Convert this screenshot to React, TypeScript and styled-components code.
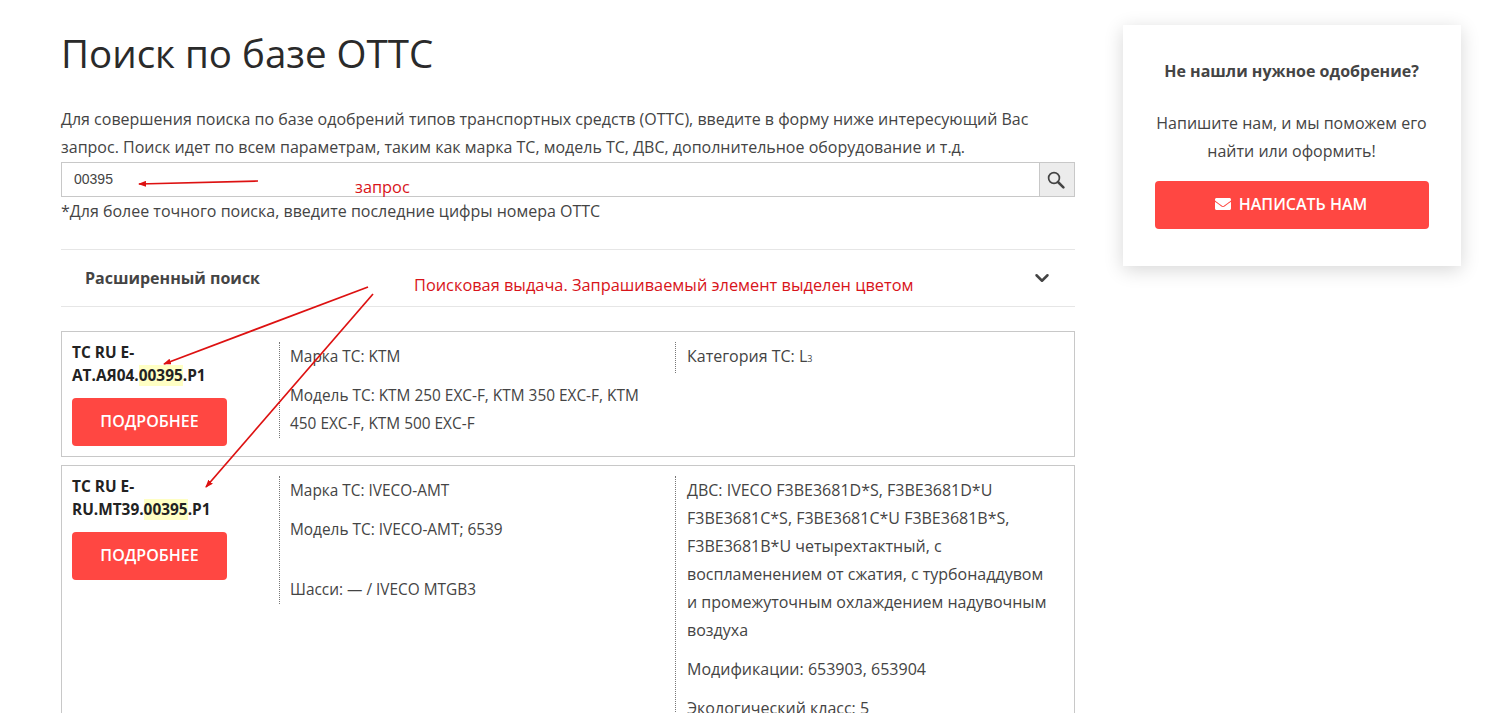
import React from 'react';
import styled, { createGlobalStyle } from 'styled-components';
import { FaEnvelope } from 'react-icons/fa';
import { ChevronDown } from 'lucide-react';

const GlobalStyle = createGlobalStyle`
    html, body {
        margin: 0;
        padding: 0;
        background: #fff;
    }
    body {
        font-family: 'Open Sans', 'Noto Sans', sans-serif;
        font-size: 16px;
        line-height: 28px;
        color: #444;
        overflow: hidden;
    }
`;

const Page = styled.div`
    position: relative;
    height: 713px;
    overflow: hidden;
    display: flex;
    align-items: flex-start;
    gap: 48px;
    padding: 25px 0 0 61px;
    box-sizing: border-box;
`;

const Main = styled.main`
    width: 1014px;
    flex: none;
`;

const Title = styled.h1`
    margin: 0 0 24px;
    font-size: 38.5px;
    line-height: 56px;
    font-weight: 400;
    color: #2a2a2a;
`;

const Intro = styled.p`
    margin: 0;
`;

const SearchRow = styled.div`
    display: flex;
    height: 35px;
    margin-top: 1px;
    box-sizing: border-box;
    border: 1px solid #c8c8c8;
`;

const SearchInput = styled.div`
    flex: 1;
    padding-left: 12px;
    font-family: 'Liberation Sans', Arial, sans-serif;
    font-size: 14px;
    line-height: 32px;
    color: #444;
`;

const SearchButton = styled.div`
    width: 34px;
    display: flex;
    align-items: center;
    justify-content: center;
    background: #ececec;
    border-left: 1px solid #c8c8c8;
    svg {
        margin-right: 2px;
    }
`;

const Note = styled.p`
    margin: 0 0 24px;
`;

const Accordion = styled.div`
    display: flex;
    align-items: center;
    justify-content: space-between;
    height: 58px;
    box-sizing: border-box;
    padding: 0 24px;
    margin-bottom: 24px;
    border-top: 1px solid #e6e6e6;
    border-bottom: 1px solid #e6e6e6;
    font-weight: 700;
    color: #444;
    svg {
        margin-right: -2px;
    }
`;

const Result = styled.article`
    display: grid;
    grid-template-columns: 207px 396px 1fr;
    box-sizing: border-box;
    padding: 10px;
    margin-bottom: 8px;
    border: 1px solid #c8c8c8;
    align-items: start;
`;

const Head = styled.div`
    padding-right: 40px;
`;

const Number = styled.div`
    font-weight: 700;
    font-size: 15.4px;
    line-height: 23px;
    color: #222;
    margin: -1px 0 11px;
`;

const Mark = styled.span`
    background: #ffffc4;
`;

const ActionButton = styled.div<{ $wide?: boolean }>`
    display: flex;
    align-items: center;
    justify-content: center;
    gap: 8px;
    box-sizing: border-box;
    width: ${(p) => (p.$wide ? '274px' : '155px')};
    height: 48px;
    padding-right: ${(p) => (p.$wide ? '2px' : '0')};
    padding-bottom: 2px;
    border-radius: 4px;
    background: #ff4742;
    color: #fff;
    font-weight: 600;
    font-size: 16px;
`;

const Column = styled.div<{ $narrow?: boolean }>`
    border-left: 1px dotted #777;
    padding-top: ${(p) => (p.$narrow ? '1px' : '0')};
    padding-left: ${(p) => (p.$narrow ? '10px' : '11px')};
    padding-right: ${(p) => (p.$narrow ? '24px' : '10px')};
    font-size: ${(p) => (p.$narrow ? '15.4px' : '16px')};
`;

const Field = styled.p<{ $gap?: number }>`
    margin: 0 0 ${(p) => p.$gap ?? 11}px;
    &:last-child {
        margin-bottom: 0;
    }
`;

const Small = styled.span`
    font-size: 9px;
`;

const Aside = styled.aside`
    width: 338px;
    flex: none;
    box-sizing: border-box;
    padding: 32px 33px 37px 32px;
    background: #fff;
    box-shadow: 0 4px 18px rgba(0, 0, 0, 0.16);
    text-align: center;
`;

const AsideTitle = styled.p`
    margin: 0 0 24px;
    font-weight: 700;
`;

const AsideText = styled.p`
    margin: 0 0 16px;
`;

const Overlay = styled.svg`
    position: absolute;
    inset: 0;
    pointer-events: none;
`;

const Label = styled.span<{ $x: number; $y: number }>`
    position: absolute;
    left: ${(p) => p.$x}px;
    top: ${(p) => p.$y}px;
    color: #d8141a;
    font-size: 16.35px;
    white-space: nowrap;
`;

export default function App() {
    return (
        <>
            <GlobalStyle />
            <Page>
                <Main>
                    <Title>Поиск по базе ОТТС</Title>
                    <Intro>
                        Для совершения поиска по базе одобрений типов транспортных средств (ОТТС), введите в форму ниже интересующий Вас запрос. Поиск идет по всем параметрам, таким как марка ТС, модель ТС, ДВС, дополнительное оборудование и т.д.
                    </Intro>
                    <SearchRow>
                        <SearchInput>00395</SearchInput>
                        <SearchButton>
                            <svg width="18" height="18" viewBox="0 0 18 18" fill="none" stroke="#444">
                                <circle cx="7" cy="7" r="5.4" strokeWidth="1.7" />
                                <line x1="11" y1="11" x2="16.4" y2="16.4" strokeWidth="2.5" strokeLinecap="round" />
                            </svg>
                        </SearchButton>
                    </SearchRow>
                    <Note>*Для более точного поиска, введите последние цифры номера ОТТС</Note>
                    <Accordion>
                        Расширенный поиск
                        <ChevronDown size={22} strokeWidth={2.7} />
                    </Accordion>

                    <Result>
                        <Head>
                            <Number>
                                ТС RU E-AT.АЯ04.<Mark>00395</Mark>.Р1
                            </Number>
                            <ActionButton>ПОДРОБНЕЕ</ActionButton>
                        </Head>
                        <Column $narrow>
                            <Field>Марка ТС: KTM</Field>
                            <Field>Модель ТС: KTM 250 EXC-F, KTM 350 EXC-F, KTM 450 EXC-F, KTM 500 EXC-F</Field>
                        </Column>
                        <Column>
                            <Field>
                                Категория ТС: L<Small>3</Small>
                            </Field>
                        </Column>
                    </Result>

                    <Result>
                        <Head>
                            <Number>
                                ТС RU E-RU.МТ39.<Mark>00395</Mark>.Р1
                            </Number>
                            <ActionButton>ПОДРОБНЕЕ</ActionButton>
                        </Head>
                        <Column $narrow>
                            <Field>Марка ТС: IVECO-AMT</Field>
                            <Field $gap={32}>Модель ТС: IVECO-AMT; 6539</Field>
                            <Field>Шасси: — / IVECO MTGB3</Field>
                        </Column>
                        <Column>
                            <Field>
                                ДВС: IVECO F3BE3681D*S, F3BE3681D*U F3BE3681C*S, F3BE3681C*U F3BE3681B*S, F3BE3681B*U четырехтактный, с воспламенением от сжатия, с турбонаддувом и промежуточным охлаждением надувочным воздуха
                            </Field>
                            <Field>Модификации: 653903, 653904</Field>
                            <Field>Экологический класс: 5</Field>
                        </Column>
                    </Result>
                </Main>

                <Aside>
                    <AsideTitle>Не нашли нужное одобрение?</AsideTitle>
                    <AsideText>Напишите нам, и мы поможем его найти или оформить!</AsideText>
                    <ActionButton $wide>
                        <FaEnvelope size={16} />
                        НАПИСАТЬ НАМ
                    </ActionButton>
                </Aside>

                <Overlay width="1495" height="713" viewBox="0 0 1495 713">
                    <defs>
                        <marker id="head" markerWidth="8" markerHeight="6" refX="7" refY="3" orient="auto" markerUnits="userSpaceOnUse">
                            <path d="M0 0 L8 3 L0 6 Z" fill="#dd1111" />
                        </marker>
                    </defs>
                    <g stroke="#dd1111" strokeWidth="1.7" fill="none">
                        <line x1="258" y1="181" x2="139" y2="184" markerEnd="url(#head)" />
                        <line x1="368" y1="287" x2="164" y2="364" markerEnd="url(#head)" />
                        <line x1="373" y1="294" x2="206" y2="487" markerEnd="url(#head)" />
                    </g>
                </Overlay>
                <Label $x={355} $y={173}>запрос</Label>
                <Label $x={414} $y={271}>Поисковая выдача. Запрашиваемый элемент выделен цветом</Label>
            </Page>
        </>
    );
}
